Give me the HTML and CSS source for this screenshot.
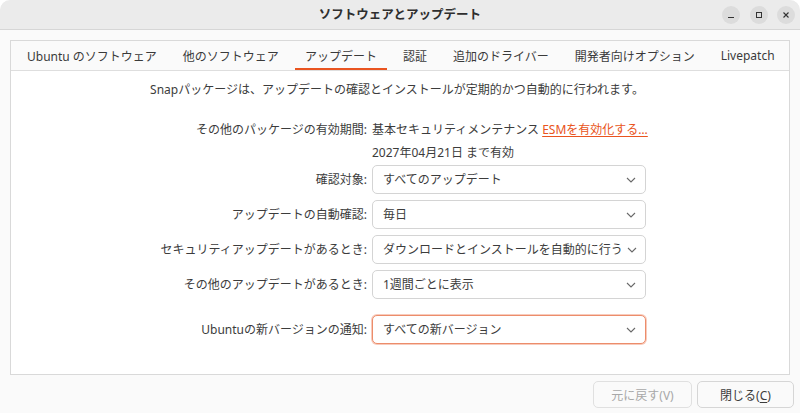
FILE: index.html
```html
<!DOCTYPE html>
<html lang="ja">
<head>
<meta charset="utf-8">
<title>ソフトウェアとアップデート</title>
<link rel="stylesheet" href="styles.css">
</head>
<body>
<div class="window">
  <header class="titlebar">
    <div></div>
    <div class="title">ソフトウェアとアップデート</div>
    <div class="controls">
      <span class="ctl"><svg width="10" height="10" viewBox="0 0 10 10"><line x1="2" y1="7.5" x2="8" y2="7.5" stroke="#333" stroke-width="1"/></svg></span>
      <span class="ctl"><svg width="10" height="10" viewBox="0 0 10 10"><rect x="2.5" y="2.5" width="5" height="5" fill="none" stroke="#333" stroke-width="1"/></svg></span>
      <span class="ctl"><svg width="10" height="10" viewBox="0 0 10 10"><path d="M2.5 2.5 L7.5 7.5 M7.5 2.5 L2.5 7.5" stroke="#333" stroke-width="1.1"/></svg></span>
    </div>
  </header>
  <main class="content">
    <section class="notebook">
      <nav class="tabs">
        <span class="tab">Ubuntu のソフトウェア</span>
        <span class="tab">他のソフトウェア</span>
        <span class="tab active">アップデート</span>
        <span class="tab">認証</span>
        <span class="tab">追加のドライバー</span>
        <span class="tab">開発者向けオプション</span>
        <span class="tab">Livepatch</span>
      </nav>
      <div class="page">
        <p class="intro">Snapパッケージは、アップデートの確認とインストールが定期的かつ自動的に行われます。</p>
        <div class="row info">
          <span class="label">その他のパッケージの有効期間:</span>
          <span class="value">基本セキュリティメンテナンス <a class="link">ESMを有効化する…</a></span>
        </div>
        <div class="row date">
          <span class="label"></span>
          <span class="value">2027年04月21日 まで有効</span>
        </div>
        <div class="row field first">
          <span class="label">確認対象:</span>
          <div class="combo"><span>すべてのアップデート</span><svg class="chev" width="10" height="6" viewBox="0 0 10 6"><polyline points="1,1 5,5 9,1" fill="none" stroke="#6a6a6a" stroke-width="1.1"/></svg></div>
        </div>
        <div class="row field">
          <span class="label">アップデートの自動確認:</span>
          <div class="combo"><span>毎日</span><svg class="chev" width="10" height="6" viewBox="0 0 10 6"><polyline points="1,1 5,5 9,1" fill="none" stroke="#6a6a6a" stroke-width="1.1"/></svg></div>
        </div>
        <div class="row field">
          <span class="label">セキュリティアップデートがあるとき:</span>
          <div class="combo"><span>ダウンロードとインストールを自動的に行う</span><svg class="chev" width="10" height="6" viewBox="0 0 10 6"><polyline points="1,1 5,5 9,1" fill="none" stroke="#6a6a6a" stroke-width="1.1"/></svg></div>
        </div>
        <div class="row field">
          <span class="label">その他のアップデートがあるとき:</span>
          <div class="combo"><span>1週間ごとに表示</span><svg class="chev" width="10" height="6" viewBox="0 0 10 6"><polyline points="1,1 5,5 9,1" fill="none" stroke="#6a6a6a" stroke-width="1.1"/></svg></div>
        </div>
        <div class="row field last">
          <span class="label">Ubuntuの新バージョンの通知:</span>
          <div class="combo focus"><span>すべての新バージョン</span><svg class="chev" width="10" height="6" viewBox="0 0 10 6"><polyline points="1,1 5,5 9,1" fill="none" stroke="#6a6a6a" stroke-width="1.1"/></svg></div>
        </div>
      </div>
    </section>
    <footer class="actions">
      <button class="btn revert" disabled>元に戻す(V)</button>
      <button class="btn close">閉じる(<u>C</u>)</button>
    </footer>
  </main>
</div>
</body>
</html>
```

FILE: styles.css
```css
* { box-sizing: border-box; }
html, body {
  margin: 0;
  padding: 0;
  width: 800px;
  height: 413px;
  background: #ffffff;
  overflow: hidden;
}
body {
  font-family: "Noto Sans", "Noto Sans CJK JP", sans-serif;
  font-size: 12px;
  color: #3c3c3c;
}
.window {
  width: 800px;
  height: 413px;
  background: #fafafa;
  border-radius: 10px 10px 0 0;
  overflow: hidden;
  display: flex;
  flex-direction: column;
}
.titlebar {
  height: 30px;
  flex: none;
  background: #ebebeb;
  border-bottom: 1px solid #d6d6d6;
  display: grid;
  grid-template-columns: 1fr auto 1fr;
  align-items: center;
}
.title {
  font-weight: bold;
  font-size: 12.5px;
  color: #2e2e2e;
  line-height: 16px;
}
.controls {
  justify-self: end;
  display: flex;
  gap: 9.5px;
  padding-right: 5px;
}
.ctl {
  width: 18px;
  height: 18px;
  border-radius: 50%;
  background: #dcdcdc;
  display: flex;
  align-items: center;
  justify-content: center;
}
.content {
  flex: 1;
  display: flex;
  flex-direction: column;
  padding: 10px 6px 0 10px;
}
.notebook {
  height: 335px;
  width: 780px;
  border: 1px solid #d9d9d9;
  display: flex;
  flex-direction: column;
  background: #fafafa;
}
.tabs {
  height: 30px;
  flex: none;
  display: flex;
  padding-left: 3px;
  border-bottom: 1px solid #dedede;
}
.tab {
  position: relative;
  padding: 0 13px;
  display: flex;
  align-items: center;
  color: #3a3a3a;
  white-space: nowrap;
}
.tab.active::after {
  content: "";
  position: absolute;
  left: 3px;
  right: 3px;
  bottom: 0;
  height: 2px;
  background: #e95420;
}
.page {
  flex: 1;
  background: #ffffff;
  padding-top: 11px;
}
.intro {
  margin: 0;
  text-align: center;
  line-height: 16px;
  padding-right: 6px;
}
.row {
  display: grid;
  grid-template-columns: 356px 274px;
  column-gap: 5px;
  align-items: center;
  line-height: 16px;
}
.label { text-align: right; white-space: nowrap; }
.value { white-space: nowrap; }
.info { margin-top: 24px; }
.date { margin-top: 7px; }
.field { height: 29px; margin-top: 6px; }
.field.first { margin-top: 4px; }
.field.last { margin-top: 16px; }
.link {
  color: #e95420;
  text-decoration: underline;
  text-underline-offset: 2px;
}
.combo {
  height: 29px;
  display: flex;
  align-items: center;
  justify-content: space-between;
  padding: 0 9px 0 10px;
  border: 1px solid #d4d4d4;
  border-radius: 5px;
  background: #ffffff;
  white-space: nowrap;
  overflow: hidden;
}
.combo.focus {
  border-color: #ec8d6b;
  box-shadow: 0 0 0 1px rgba(233, 84, 32, 0.3);
}
.chev { flex: none; margin-left: 4px; }
.actions {
  margin-top: 6px;
  display: flex;
  justify-content: flex-end;
  gap: 5px;
}
.btn {
  height: 27px;
  font-family: inherit;
  font-size: 12px;
  border: 1px solid #d6d6d6;
  border-radius: 5px;
  background: #fafafa;
  color: #3c3c3c;
  padding: 0;
}
.btn.revert { width: 99px; color: #a8a8a8; border-color: #e0e0e0; }
.btn.close { width: 97px; }
.btn u { text-underline-offset: 2px; }
```
